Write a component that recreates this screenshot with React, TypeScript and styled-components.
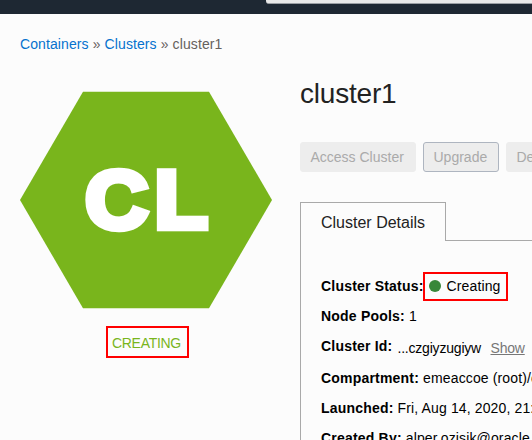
import React from "react";
import styled, { createGlobalStyle } from "styled-components";

const GlobalStyle = createGlobalStyle`
  * { box-sizing: border-box; }
  body { margin: 0; background: #fcfcfc; overflow: hidden; }
`;

const Page = styled.div`
  width: 532px;
  height: 440px;
  overflow: hidden;
  background: #fcfcfc;
  color: #000;
  font: 14px/20px "Liberation Sans", Arial, sans-serif;
`;

const TopBar = styled.header`
  display: flex;
  justify-content: flex-end;
  height: 14px;
  background: #1e2833;
`;

const SearchField = styled.div`
  width: 266px;
  height: 4px;
  background: #e9e9e9;
  border-bottom: 1px solid #9b9fa4;
  border-bottom-left-radius: 3px;
`;

const Breadcrumb = styled.nav`
  height: 20px;
  margin: 20px 0 0 20px;
  color: #66615d;
  letter-spacing: 0.1px;
  white-space: pre;
`;

const Crumb = styled.a`
  color: #0572ce;
`;

const Columns = styled.main`
  display: grid;
  grid-template-columns: 252px 500px;
  column-gap: 28px;
  margin-left: 20px;
`;

const Badge = styled.aside`
  display: flex;
  flex-direction: column;
  padding-top: 37px;
`;

const Hexagon = styled.svg`
  display: block;
`;

const Letters = styled.text`
  font: bold 82px "Liberation Sans", Arial, sans-serif;
  fill: #fff;
  stroke: #fff;
  stroke-width: 6.5px;
  stroke-linejoin: miter;
`;

const BadgeStatus = styled.div`
  width: 83px;
  height: 32px;
  margin: 17px 0 0 86px;
  padding-left: 4px;
  border: 2px solid #ff0000;
  color: #79b51c;
  letter-spacing: -0.3px;
  line-height: 31px;
  white-space: nowrap;
`;

const Title = styled.h1`
  height: 40px;
  margin: 20px 0 0;
  color: #222;
  font-size: 28px;
  font-weight: 400;
  letter-spacing: -0.2px;
  line-height: 40px;
`;

const Toolbar = styled.div`
  display: flex;
  gap: 7px;
  height: 30px;
  margin-top: 28px;
`;

const Button = styled.button<{ $width: number; $outlined?: boolean }>`
  flex: none;
  width: ${(p) => p.$width}px;
  height: 30px;
  padding: 0 9.5px;
  border: 1px solid ${(p) => (p.$outlined ? "#aeb5c0" : "#ededed")};
  border-radius: 3px;
  background: #ededed;
  color: #aaa;
  font: inherit;
  text-align: left;
  white-space: nowrap;
`;

const TabStrip = styled.div`
  display: flex;
  height: 39px;
  margin-top: 30px;
`;

const Tab = styled.div`
  width: 146px;
  border: 1px solid #a9a9a9;
  border-bottom: 0;
  padding-left: 20px;
  color: #222;
  font-size: 16px;
  line-height: 39px;
`;

const TabRule = styled.div`
  flex: 1;
  border-bottom: 1px solid #a9a9a9;
`;

const Details = styled.section`
  height: 220px;
  padding: 30px 0 0 20px;
  border-left: 1px solid #a9a9a9;
`;

const Row = styled.div`
  display: flex;
  align-items: center;
  height: 30px;
  letter-spacing: 0.13px;
  white-space: pre;
`;

const IdRow = styled(Row)`
  height: 32px;
  padding-bottom: 2px;
`;

const Label = styled.b`
  letter-spacing: 0.2px;
`;

const StatusBox = styled.span`
  display: flex;
  align-items: center;
  width: 85px;
  height: 29px;
  margin-left: -1px;
  padding-left: 4px;
  border: 2px solid #ff0000;
`;

const Dot = styled.i`
  width: 12px;
  height: 12px;
  margin-right: 6px;
  border-radius: 50%;
  background: #388739;
`;

const ClusterId = styled.span`
  margin-left: 5px;
  padding-top: 3px;
  letter-spacing: -0.2px;
`;

const ShowLink = styled.a`
  margin-left: 9.5px;
  padding-top: 3px;
  color: #777;
  letter-spacing: -0.2px;
  text-decoration: underline;
`;

export default function App() {
  return (
    <Page>
      <GlobalStyle />
      <TopBar><SearchField /></TopBar>
      <Breadcrumb>
        <Crumb>Containers</Crumb>{" » "}<Crumb>Clusters</Crumb>{" » cluster1"}
      </Breadcrumb>
      <Columns>
        <Badge>
          <Hexagon width="252" height="218" viewBox="0 0 252 218">
            <polygon points="63,0.7 189,0.7 252,109 189,217.3 63,217.3 0,109" fill="#79b51c" />
            <g transform="scale(1.063 1)">
              <Letters x="61.5" y="136.75">C</Letters>
              <Letters x="126.5" y="136.75">L</Letters>
            </g>
          </Hexagon>
          <BadgeStatus>CREATING</BadgeStatus>
        </Badge>
        <div>
          <Title>cluster1</Title>
          <Toolbar>
            <Button $width={116}>Access Cluster</Button>
            <Button $width={76} $outlined>Upgrade</Button>
            <Button $width={66}>Delete</Button>
          </Toolbar>
          <TabStrip><Tab>Cluster Details</Tab><TabRule /></TabStrip>
          <Details>
            <Row>
              <Label>Cluster Status:</Label>
              <StatusBox><Dot />Creating</StatusBox>
            </Row>
            <Row><Label>Node Pools:</Label> 1</Row>
            <IdRow>
              <Label>Cluster Id:</Label>
              <ClusterId>...czgiyzugiyw</ClusterId>
              <ShowLink>Show</ShowLink>
            </IdRow>
            <Row><Label>Compartment:</Label> emeaccoe (root)/oke</Row>
            <Row><Label>Launched:</Label> Fri, Aug 14, 2020, 21:05:12 UTC</Row>
            <Row><Label>Created By:</Label> alper.ozisik@oracle.com</Row>
          </Details>
        </div>
      </Columns>
    </Page>
  );
}
